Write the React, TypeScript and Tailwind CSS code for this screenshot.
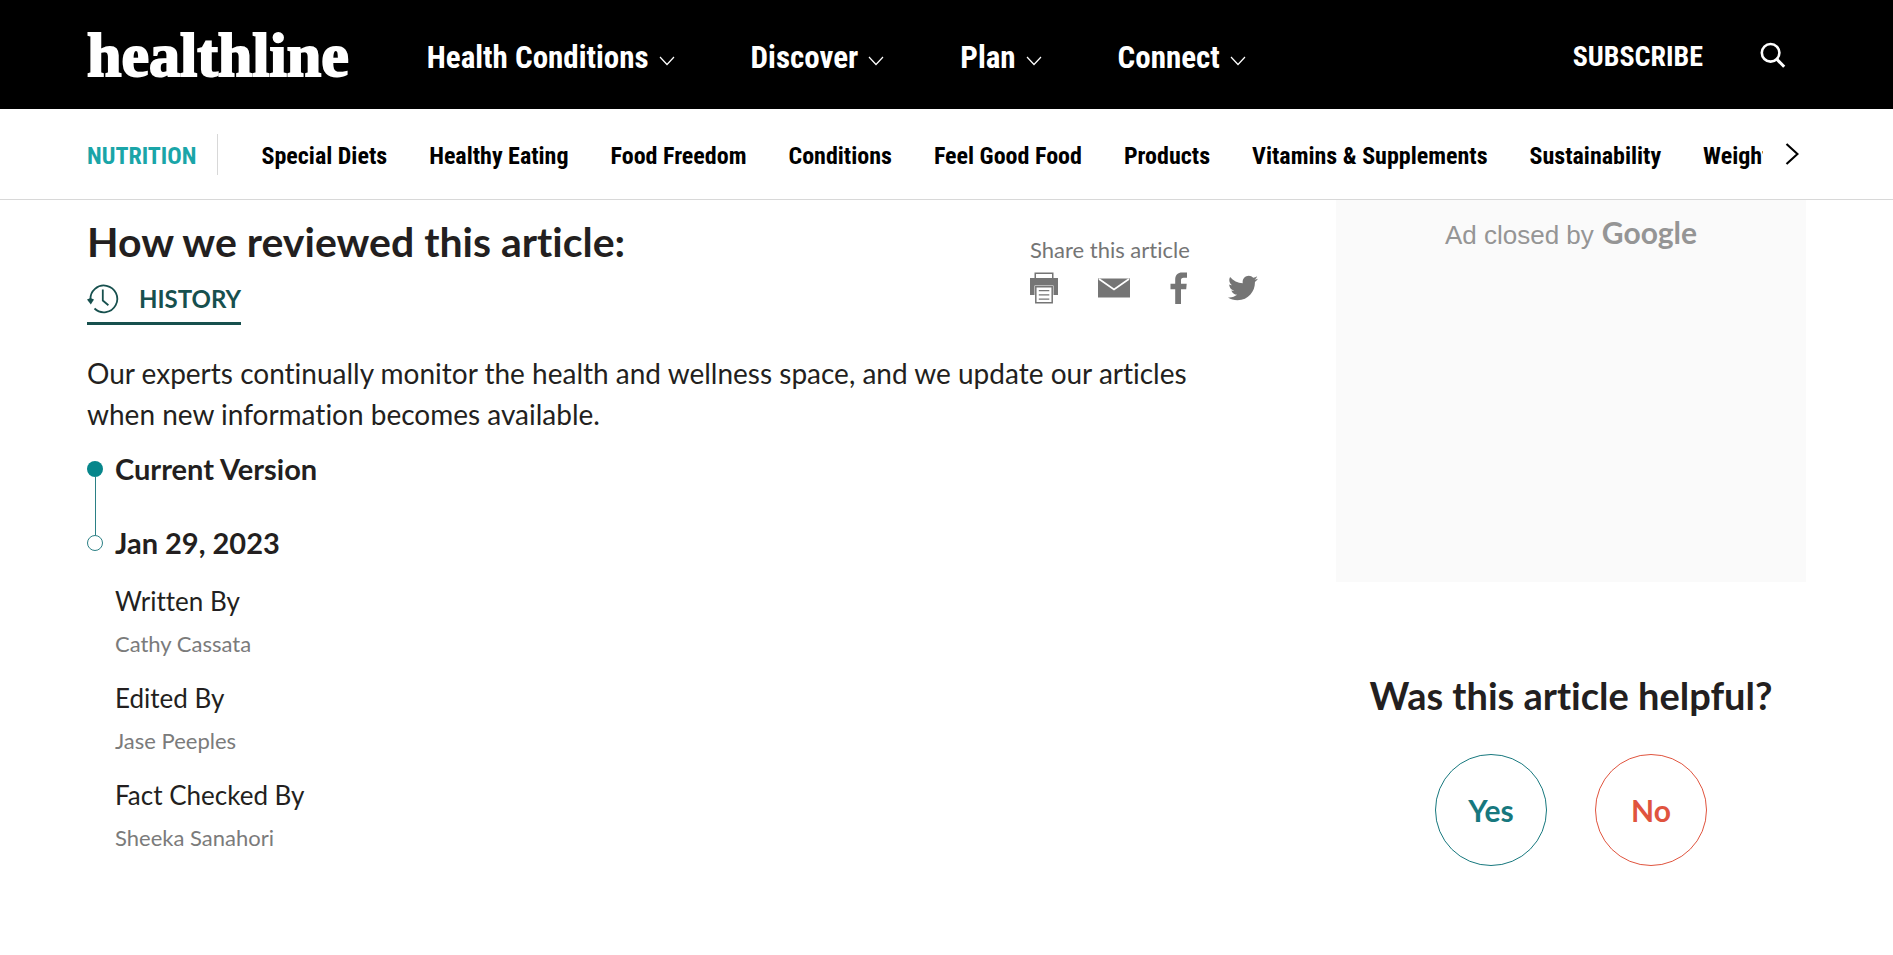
import React from "react";
import { FaTwitter } from "react-icons/fa";

const mainNav = ["Health Conditions", "Discover", "Plan", "Connect"];

const topics = [
  "Special Diets",
  "Healthy Eating",
  "Food Freedom",
  "Conditions",
  "Feel Good Food",
  "Products",
  "Vitamins & Supplements",
  "Sustainability",
  "Weight Management",
];

const credits = [
  { role: "Written By", name: "Cathy Cassata" },
  { role: "Edited By", name: "Jase Peeples" },
  { role: "Fact Checked By", name: "Sheeka Sanahori" },
];

function ChevronDown() {
  return (
    <svg className="mt-1 h-[10px] w-4" viewBox="0 0 16 10" fill="none" stroke="currentColor" strokeWidth="1.2" aria-hidden="true">
      <path d="M1 1l7 7.5L15 1" />
    </svg>
  );
}

function SearchIcon() {
  return (
    <svg className="size-[26px]" viewBox="0 0 26 26" fill="none" stroke="currentColor" strokeWidth="2.6" aria-hidden="true">
      <circle cx="10.6" cy="10.8" r="8.8" />
      <path d="M16.8 17.2l7.4 7.6" strokeWidth="3" />
    </svg>
  );
}

function HistoryIcon() {
  return (
    <svg className="h-[30px] w-8" viewBox="0 0 32 30" fill="none" stroke="currentColor" strokeWidth="1.8" aria-hidden="true">
      <path d="M3.500 16A13.400 13.400 0 1 1 7.500 24.500" />
      <path d="M15.800 5.500v11l5.600 4.700" />
      <path d="M0 15.500l3.500-1.500 3.500 1.500-3.200 5z" fill="currentColor" stroke="none" />
    </svg>
  );
}

function PrintIcon() {
  return (
    <svg className="h-8 w-7" viewBox="0 0 28 32" fill="currentColor" aria-hidden="true">
      <path d="M4.500 .5h19V6h-1.500V2H6v4H4.500z" />
      <path d="M0 6h28v17H0z" />
      <path d="M4.500 13.500h19V24h-19z" fill="#fff" />
      <path d="M5.800 14.800h16.400v16H5.800z" fill="#fff" stroke="currentColor" strokeWidth="1.500" />
      <path d="M8.800 18h10.500v1.300H8.800zM8.800 22.200h10.500v1.300H8.800zM8.800 26.400h10.500v1.300H8.800z" />
    </svg>
  );
}

function MailIcon() {
  return (
    <svg className="h-5 w-8" viewBox="0 0 32 20" fill="currentColor" aria-hidden="true">
      <path d="M0 .5h32v19H0z" />
      <path d="M1 1l15 10.500L31 1" fill="none" stroke="#fff" strokeWidth="1.700" />
    </svg>
  );
}

function FacebookIcon() {
  return (
    <svg className="h-8 w-[18px]" viewBox="0 0 18 32" fill="currentColor" aria-hidden="true">
      <path d="M5.200 32V17.300H.5v-5.500h4.700V7.500C5.200 3 8 .5 12 .5h5v5.300h-3.400c-2 0-2.600.9-2.600 2.700v3.300h5.700l-.5 5.500H11V32z" />
    </svg>
  );
}

const share = [
  { label: "Print", icon: <PrintIcon /> },
  { label: "Email", icon: <MailIcon /> },
  { label: "Facebook", icon: <FacebookIcon /> },
  { label: "Twitter", icon: <FaTwitter className="size-[30px]" /> },
];

export default function App() {
  return (
    <div className="min-h-screen bg-white font-['Lato',sans-serif] text-[#231f20] [font-variant-ligatures:none]">
      <header className="font-['Roboto_Condensed','Roboto',sans-serif] font-bold">
        <div className="flex h-[109px] items-center bg-black px-[87px] text-white">
          <a href="#" className="font-['Liberation_Serif',serif] text-[62px] leading-none [-webkit-text-stroke:2px_white]">
            healthline
          </a>
          <nav className="ml-[78px] flex gap-[76px] pt-2 text-[31px]">
            {mainNav.map((item) => (
              <button key={item} type="button" className="flex items-center gap-[10px] whitespace-nowrap">
                {item}
                <ChevronDown />
              </button>
            ))}
          </nav>
          <a href="#" className="ml-auto pt-1 text-[28px]">SUBSCRIBE</a>
          <button type="button" aria-label="Search" className="mr-5 ml-[57px]">
            <SearchIcon />
          </button>
        </div>
        <nav className="flex h-[91px] items-center border-b border-[#d8d8d8] pr-[94px] pl-[87px] text-2xl text-black">
          <a href="#" className="flex h-[41px] items-center border-r border-[#d8d8d8] pt-1 pr-5 text-[#1aa5a8]">NUTRITION</a>
          <ul className="ml-11 flex min-w-0 flex-1 gap-[42px] overflow-hidden pt-1">
            {topics.map((topic) => (
              <li key={topic}>
                <a href="#" className="whitespace-nowrap">{topic}</a>
              </li>
            ))}
          </ul>
          <button type="button" aria-label="More topics" className="ml-[22px]">
            <svg className="h-6 w-[14px]" viewBox="0 0 14 24" fill="none" stroke="currentColor" strokeWidth="2.2" aria-hidden="true">
              <path d="M1.500 2l11 10-11 10" />
            </svg>
          </button>
        </nav>
      </header>

      <main className="flex gap-[78px] px-[87px]">
        <article className="min-w-0 flex-1">
          <div className="flex items-start justify-between">
            <div>
              <h1 className="mt-4 text-[41px] leading-[52px] font-bold">How we reviewed this article:</h1>
              <button type="button" className="mt-4 flex items-center gap-5 border-b-3 border-[#17504e] pb-2 text-2xl leading-[30px] font-bold text-[#17504e]">
                <HistoryIcon />
                HISTORY
              </button>
            </div>
            <div className="mt-9 w-[228px] text-[#757575]">
              <p className="text-[22px] leading-7">Share this article</p>
              <div className="mt-2 flex items-center justify-between">
                {share.map((s) => (
                  <a key={s.label} href="#" aria-label={s.label}>{s.icon}</a>
                ))}
              </div>
            </div>
          </div>

          <p className="mt-7 text-[28px] leading-[41px]">
            Our experts continually monitor the health and wellness space, and we update our articles when new
            information becomes available.
          </p>

          <ol className="mt-4">
            <li className="flex gap-3">
              <div className="flex w-4 flex-col items-center pt-[10px]">
                <span className="size-4 shrink-0 rounded-full bg-[#07868b]" />
                <span className="-mb-[10px] w-px flex-1 bg-[#2b8085]" />
              </div>
              <h2 className="h-[74px] text-[29px] leading-9 font-bold">Current Version</h2>
            </li>
            <li className="flex gap-3">
              <div className="w-4">
                <span className="mt-[10px] block size-4 rounded-full border border-[#2b8085]" />
              </div>
              <div>
                <h2 className="text-[29px] leading-9 font-bold">Jan 29, 2023</h2>
                <dl>
                  {credits.map((c) => (
                    <div key={c.role} className="mt-5">
                      <dt className="text-[26px] leading-[41px]">{c.role}</dt>
                      <dd className="pt-2 text-[22px] leading-7 text-[#7b7b7b]">{c.name}</dd>
                    </div>
                  ))}
                </dl>
              </div>
            </li>
          </ol>
        </article>

        <aside className="w-[470px] shrink-0 text-center">
          <div className="flex h-[382px] items-baseline justify-center gap-2 bg-[#fafafa] pt-3 text-[#959595]">
            <span className="font-['Liberation_Sans',sans-serif] text-[26px]">Ad closed by</span>
            <span className="text-[30px] leading-10 font-bold">Google</span>
          </div>
          <h2 className="mt-[88px] text-[38px] leading-[50px] font-bold">Was this article helpful?</h2>
          <div className="mt-[34px] flex justify-center gap-12 text-[30px] font-bold">
            <button type="button" className="size-28 rounded-full border border-[#17787e] text-[#17787e]">Yes</button>
            <button type="button" className="size-28 rounded-full border border-[#e0543e] text-[#e0543e]">No</button>
          </div>
        </aside>
      </main>
    </div>
  );
}
